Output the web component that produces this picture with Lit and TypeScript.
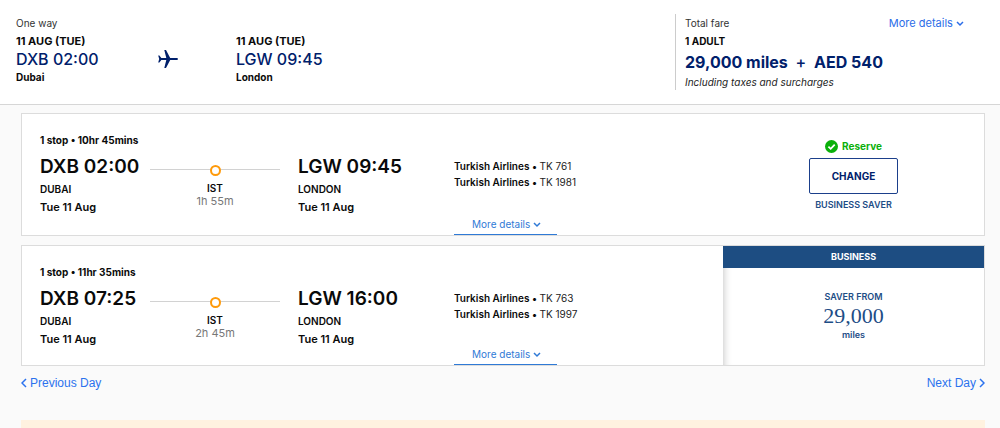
import { LitElement, html, css, svg, nothing } from "lit";
import { customElement, property } from "lit/decorators.js";

interface Flight {
  duration: string;
  depart: string;
  arrive: string;
  layover: string;
  numbers: string[];
  selected: boolean;
}

const flights: Flight[] = [
  {
    duration: "1 stop • 10hr 45mins",
    depart: "DXB 02:00",
    arrive: "LGW 09:45",
    layover: "1h 55m",
    numbers: ["TK 761", "TK 1981"],
    selected: true,
  },
  {
    duration: "1 stop • 11hr 35mins",
    depart: "DXB 07:25",
    arrive: "LGW 16:00",
    layover: "2h 45m",
    numbers: ["TK 763", "TK 1997"],
    selected: false,
  },
];

const chevron = (d: string, w: number, h: number) => html`
  <svg width=${w} height=${h} viewBox="0 0 ${w} ${h}" fill="none" stroke="currentColor" stroke-width="1.5" aria-hidden="true">
    ${svg`<path d=${d} />`}
  </svg>
`;
const chevronDown = chevron("M1 1L4 4L7 1", 8, 6);

@customElement("trip-summary")
class TripSummary extends LitElement {
  static styles = css`
    :host {
      display: grid;
      grid-template-columns: 675fr 325fr;
      padding: 14px 0;
      background: #fff;
      border-bottom: 1px solid #d6d6d6;
      font-size: 11px;
      line-height: 18px;
    }
    .route {
      display: grid;
      grid-template-columns: 142px 78px 1fr;
      padding-left: 16px;
    }
    .end {
      padding-top: 18px;
    }
    .label {
      font-size: 10px;
      color: #333;
    }
    .strong {
      font-weight: 700;
    }
    .place {
      font-size: 10px;
      font-weight: 700;
    }
    .time {
      font-size: 16px;
      font-weight: 500;
      color: #00206b;
    }
    .plane {
      display: block;
      margin-top: 35px;
    }
    .fare {
      display: grid;
      grid-template-columns: 1fr auto;
      padding: 0 36px 0 9px;
      border-left: 1px solid #ccc;
    }
    .total {
      font-size: 16px;
      line-height: 24px;
      font-weight: 700;
      color: #00206b;
    }
    .plus {
      padding: 0 4px;
      font-weight: 500;
    }
    .note {
      font-size: 10px;
      line-height: 16px;
      font-style: italic;
      color: #222;
    }
    .more {
      align-self: start;
      color: #2b6de8;
      text-decoration: none;
    }
  `;

  render() {
    return html`
      <div class="route">
        <div>
          <div class="label">One way</div>
          <div class="strong">11 AUG (TUE)</div>
          <div class="time">DXB 02:00</div>
          <div class="place">Dubai</div>
        </div>
        <svg class="plane" width="20" height="20" viewBox="0 0 20 20" fill="#00206b" aria-hidden="true">
          <path d="M20 10C20 9.400 19.300 9 18.300 9H12.200L8 1H6.300L8.300 9H3.300L1.400 6.600H0.200L1.200 10L0.200 13.400H1.400L3.300 11H8.300L6.300 19H8L12.200 11H18.300C19.300 11 20 10.600 20 10Z" />
        </svg>
        <div class="end">
          <div class="strong">11 AUG (TUE)</div>
          <div class="time">LGW 09:45</div>
          <div class="place">London</div>
        </div>
      </div>
      <div class="fare">
        <div>
          <div class="label">Total fare</div>
          <div class="place">1 ADULT</div>
          <div class="total">29,000 miles <span class="plus">+</span> AED 540</div>
          <div class="note">Including taxes and surcharges</div>
        </div>
        <a class="more" href="#fare">More details ${chevronDown}</a>
      </div>
    `;
  }
}

@customElement("flight-card")
class FlightCard extends LitElement {
  @property({ attribute: false }) flight!: Flight;

  static styles = css`
    :host {
      display: block;
    }
    .card {
      display: grid;
      grid-template-columns: 414px 1fr 261px;
      background: #fff;
      border: 1px solid #dcdcdc;
      font-size: 10px;
      line-height: 18px;
      font-weight: 600;
    }
    .itinerary {
      padding: 17px 0 0 18px;
    }
    .legs {
      display: grid;
      grid-template-columns: 110px 130px 1fr;
      margin-top: 5px;
    }
    .arrive {
      padding-left: 18px;
    }
    .duration {
      font-weight: 700;
    }
    .time {
      font-size: 19px;
      line-height: 26px;
    }
    .date {
      font-size: 11px;
    }
    .stop {
      text-align: center;
      line-height: 13px;
    }
    .track {
      display: grid;
      place-items: center;
      padding: 11px 0 6px;
    }
    .track::before,
    .dot {
      grid-area: 1 / 1;
      box-sizing: border-box;
    }
    .track::before {
      content: "";
      width: 100%;
      height: 4px;
      border-top: 1px solid #d2d2d2;
    }
    .dot {
      width: 11px;
      height: 11px;
      border: 2px solid #ff9a0a;
      border-radius: 50%;
      background: #fff;
    }
    .wait {
      font-size: 11px;
      font-weight: 400;
      color: #777;
    }
    .airlines {
      display: flex;
      flex-direction: column;
      align-items: flex-start;
      justify-content: space-between;
      padding-left: 18px;
      line-height: 16px;
    }
    ul {
      list-style: none;
      margin: 0;
      padding: 44px 0 23px;
    }
    .number {
      font-weight: 400;
      color: #222;
    }
    .more {
      padding: 0 16px 0 18px;
      border-bottom: 1px solid #2f7ad6;
      font-size: 10px;
      line-height: 19px;
      font-weight: 400;
      color: #2f7ad6;
      text-decoration: none;
    }
    .fare {
      display: flex;
      flex-direction: column;
      align-items: center;
      color: #1d4d86;
      font-size: 9px;
      line-height: 16px;
    }
    .reserve {
      display: flex;
      align-items: center;
      gap: 4px;
      padding-top: 23px;
      font-size: 10px;
      line-height: 18px;
      font-weight: 700;
      color: #0ab00a;
    }
    button {
      margin: 3px 0;
      padding: 0 22px;
      border: 1px solid #1b3f8b;
      border-radius: 2px;
      background: #fff;
      font: inherit;
      font-size: 10px;
      font-weight: 700;
      line-height: 34px;
      color: #00206b;
    }
    .saver {
      padding-bottom: 22px;
    }
    .offer {
      box-shadow: inset 8px 0 8px -8px #bbb;
    }
    .cabin {
      align-self: stretch;
      margin-bottom: 21px;
      background: #1d4d82;
      color: #fff;
      font-weight: 700;
      line-height: 22px;
      text-align: center;
    }
    .miles {
      font-family: "Liberation Serif", serif;
      font-size: 22px;
      line-height: 22px;
      font-weight: 400;
    }
  `;

  private renderFare() {
    return this.flight.selected
      ? html`
          <div class="fare">
            <div class="reserve">
              <svg width="13" height="13" viewBox="0 0 13 13" aria-hidden="true">
                <circle cx="6.5" cy="6.5" r="6.500" fill="#0ab00a" />
                <path d="M3.400 6.600L5.700 8.800L9.700 4.600" fill="none" stroke="#fff" stroke-width="1.800" />
              </svg>
              Reserve
            </div>
            <button type="button">CHANGE</button>
            <div class="saver">BUSINESS SAVER</div>
          </div>
        `
      : html`
          <div class="fare offer">
            <div class="cabin">BUSINESS</div>
            <div>SAVER FROM</div>
            <div class="miles">29,000</div>
            <div>miles</div>
          </div>
        `;
  }

  render() {
    const f = this.flight;
    if (!f) return nothing;
    return html`
      <article class="card">
        <div class="itinerary">
          <div class="duration">${f.duration}</div>
          <div class="legs">
            <div>
              <div class="time">${f.depart}</div>
              <div>DUBAI</div>
              <div class="date">Tue 11 Aug</div>
            </div>
            <div class="stop">
              <div class="track"><span class="dot"></span></div>
              <div>IST</div>
              <div class="wait">${f.layover}</div>
            </div>
            <div class="arrive">
              <div class="time">${f.arrive}</div>
              <div>LONDON</div>
              <div class="date">Tue 11 Aug</div>
            </div>
          </div>
        </div>
        <div class="airlines">
          <ul>
            ${f.numbers.map((n) => html`<li>Turkish Airlines • <span class="number">${n}</span></li>`)}
          </ul>
          <a class="more" href="#details">More details ${chevronDown}</a>
        </div>
        ${this.renderFare()}
      </article>
    `;
  }
}

@customElement("app-root")
class AppRoot extends LitElement {
  static styles = css`
    :host {
      display: block;
      height: 100vh;
      overflow: hidden;
      background: #fafafa;
      color: #0a0a0a;
      font-family: Inter, "Open Sans", sans-serif;
    }
    main {
      display: flex;
      flex-direction: column;
      gap: 9px;
      padding: 8px 15px 0 21px;
    }
    nav {
      display: flex;
      justify-content: space-between;
      font: 12px/16px "Liberation Sans", sans-serif;
    }
    nav a {
      display: flex;
      align-items: center;
      gap: 3px;
      color: #2b72ee;
      text-decoration: none;
    }
    .notice {
      height: 40px;
      margin-top: 20px;
      background: #fff2e0;
    }
  `;

  render() {
    return html`
      <trip-summary></trip-summary>
      <main>
        ${flights.map((f) => html`<flight-card .flight=${f}></flight-card>`)}
        <nav>
          <a href="#previous">${chevron("M5 1L1 5L5 9", 6, 10)}Previous Day</a>
          <a href="#next">Next Day${chevron("M1 1L5 5L1 9", 6, 10)}</a>
        </nav>
        <div class="notice"></div>
      </main>
    `;
  }
}
